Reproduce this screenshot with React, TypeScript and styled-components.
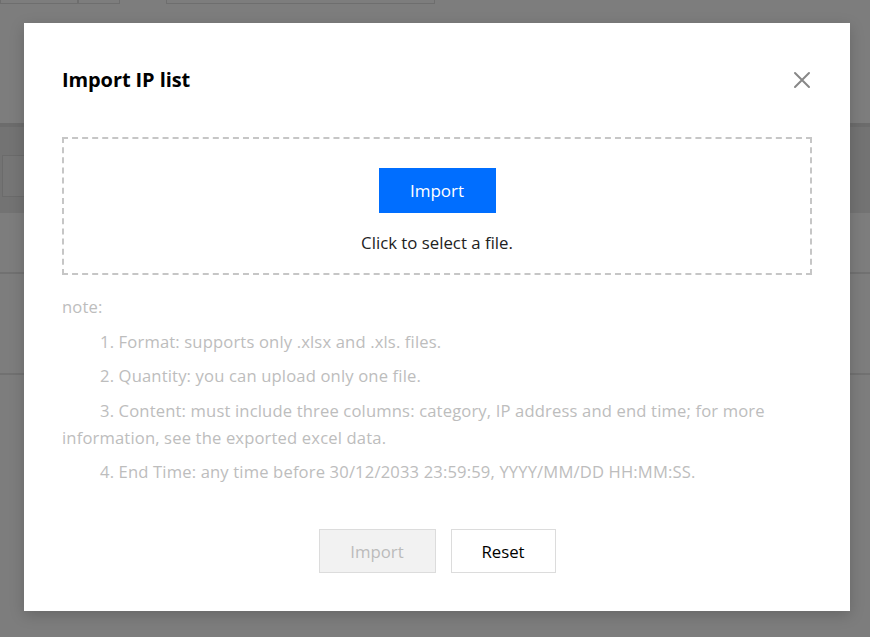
import React from "react";
import styled, { createGlobalStyle } from "styled-components";

const Global = createGlobalStyle`
  html, body { margin: 0; padding: 0; }
  body { width: 870px; height: 637px; overflow: hidden; font-family: "Open Sans", "Noto Sans", sans-serif; }
  * { box-sizing: border-box; }
`;

const Page = styled.div`
  position: relative;
  width: 870px;
  height: 637px;
  background: #fbfbfb;
  overflow: hidden;
`;

const Toolbar = styled.div`
  display: flex;
  align-items: flex-end;
  height: 4px;
`;

const FakeInput = styled.div<{ $w: number; $ml?: number }>`
  width: ${(p) => p.$w}px;
  margin-left: ${(p) => p.$ml ?? 0}px;
  height: 4px;
  border: 1px solid #dcdcdc;
  border-top: none;
`;

const Gap = styled.div<{ $h: number }>`
  height: ${(p) => p.$h}px;
`;

const Band = styled.div`
  height: 4px;
  background: #d8d8d8;
`;

const FilterArea = styled.div`
  height: 86px;
  background: #e6e6e6;
  padding: 28px 0 0 2px;
`;

const FilterBox = styled.div`
  width: 60px;
  height: 42px;
  border: 1px solid #d6d6d6;
  background: #ececec;
`;

const Row = styled.div<{ $h: number }>`
  height: ${(p) => p.$h}px;
  border-bottom: 2px solid #e2e2e2;
`;

const Overlay = styled.div`
  position: absolute;
  inset: 0;
  background: rgba(0, 0, 0, 0.5);
`;

const Modal = styled.div`
  position: absolute;
  left: 24px;
  top: 23px;
  width: 826px;
  height: 588px;
  background: #fff;
  box-shadow: 0 4px 14px rgba(0, 0, 0, 0.18);
  padding: 45px 38px 38px 38px;
  display: flex;
  flex-direction: column;
`;

const Header = styled.div`
  display: flex;
  align-items: center;
  justify-content: space-between;
  height: 24px;
`;

const Title = styled.h2`
  margin: 0;
  font-size: 20px;
  font-weight: 700;
  color: #000;
  line-height: 24px;
  letter-spacing: -0.1px;
`;

const CloseBtn = styled.button`
  border: none;
  background: none;
  padding: 0;
  width: 20px;
  height: 20px;
  display: flex;
  align-items: center;
  justify-content: center;
  cursor: pointer;
`;

const DropZone = styled.div`
  margin-top: 45px;
  height: 138px;
  border: 2px dashed #c6c6c6;
  display: flex;
  flex-direction: column;
  align-items: center;
  padding-top: 29px;
`;

const PrimaryButton = styled.button`
  width: 117px;
  height: 45px;
  border: none;
  background: #006eff;
  color: #fff;
  font-family: inherit;
  font-size: 17px;
  cursor: pointer;
`;

const Hint = styled.div`
  margin-top: 19px;
  font-size: 16.8px;
  line-height: 22px;
  color: #222;
`;

const Notes = styled.div`
  margin-top: 18px;
  color: #bdbdbd;
  font-size: 16.6px;
  line-height: 27px;
  letter-spacing: 0.15px;
`;

const NoteLine = styled.p<{ $indent?: boolean }>`
  margin: 0 0 7.5px 0;
  text-indent: ${(p) => (p.$indent ? "38px" : "0")};
`;

const Footer = styled.div`
  margin-top: auto;
  display: flex;
  justify-content: center;
  gap: 15px;
`;

const FooterButton = styled.button<{ $w: number; $disabled?: boolean }>`
  width: ${(p) => p.$w}px;
  height: 44px;
  border: 1px solid #dcdcdc;
  background: ${(p) => (p.$disabled ? "#f2f2f2" : "#fff")};
  color: ${(p) => (p.$disabled ? "#bbbbbb" : "#000")};
  font-family: inherit;
  font-size: 16.8px;
  cursor: ${(p) => (p.$disabled ? "not-allowed" : "pointer")};
`;

export default function App() {
  return (
    <>
      <Global />
      <Page>
        <Toolbar>
          <FakeInput $w={78} />
          <FakeInput $w={42} />
          <FakeInput $w={269} $ml={46} />
        </Toolbar>
        <Gap $h={119} />
        <Band />
        <FilterArea>
          <FilterBox />
        </FilterArea>
        <Row $h={61} />
        <Row $h={101} />
        <Overlay />
        <Modal>
          <Header>
            <Title>Import IP list</Title>
            <CloseBtn aria-label="close">
              <svg width="18" height="18" viewBox="0 0 18 18">
                <path d="M2 2 L16 16 M16 2 L2 16" stroke="#888" strokeWidth="2" strokeLinecap="round" />
              </svg>
            </CloseBtn>
          </Header>
          <DropZone>
            <PrimaryButton>Import</PrimaryButton>
            <Hint>Click to select a file.</Hint>
          </DropZone>
          <Notes>
            <NoteLine>note:</NoteLine>
            <NoteLine $indent>1. Format: supports only .xlsx and .xls. files.</NoteLine>
            <NoteLine $indent>2. Quantity: you can upload only one file.</NoteLine>
            <NoteLine $indent>
              3. Content: must include three columns: category, IP address and end time; for more information, see the exported excel data.
            </NoteLine>
            <NoteLine $indent>4. End Time: any time before 30/12/2033 23:59:59, YYYY/MM/DD HH:MM:SS.</NoteLine>
          </Notes>
          <Footer>
            <FooterButton $w={117} $disabled disabled>Import</FooterButton>
            <FooterButton $w={105}>Reset</FooterButton>
          </Footer>
        </Modal>
      </Page>
    </>
  );
}
